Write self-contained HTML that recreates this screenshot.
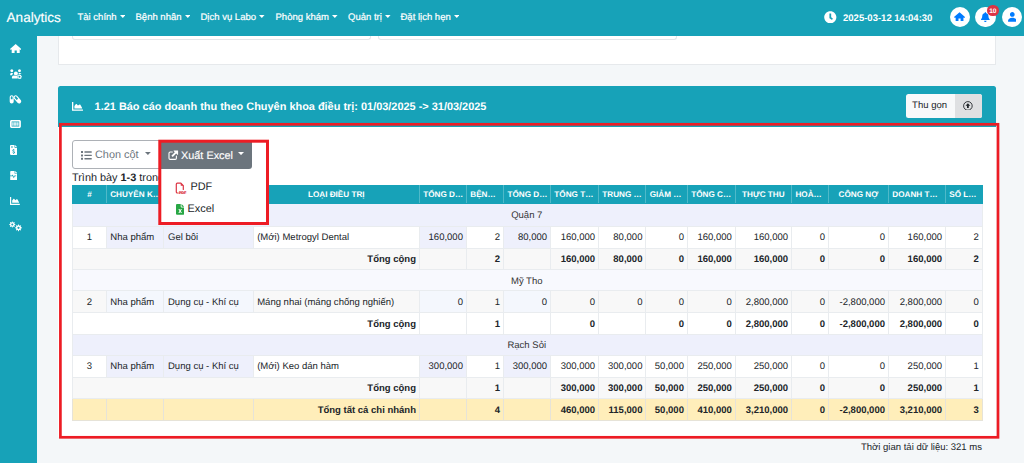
<!DOCTYPE html>
<html lang="vi">
<head>
<meta charset="utf-8">
<title>Analytics</title>
<style>
*{box-sizing:border-box;margin:0;padding:0}
html,body{width:1024px;height:463px;overflow:hidden}
body{text-rendering:geometricPrecision;background:#f4f7f9;font-family:"Liberation Sans",Arial,sans-serif;color:#212529;position:relative;font-size:9.53px}
.abs{position:absolute}
#nav{left:0;top:0;width:1024px;height:35.8px;background:#17a2b8}
#side{left:0;top:35px;width:37px;height:428px;background:#17a2b8}
#brand{-webkit-text-stroke:0.15px #fff;left:6.5px;top:8.6px;font-size:13.6px;color:#fff;line-height:18px;white-space:nowrap}
.nl{-webkit-text-stroke:0.2px #fff;top:12.4px;font-size:9.53px;color:#fff;line-height:12px;white-space:nowrap}
.nl svg{margin-left:3.1px;vertical-align:2.8px}
#time{left:843px;top:13.2px;font-size:9.53px;font-weight:bold;color:#fff;line-height:12px;white-space:nowrap}
.circ{width:20.6px;height:20.6px;border-radius:50%;background:#fff;top:6.7px}
#badge{left:986.8px;top:5.3px;padding-top:0.7px;width:12.1px;height:11.1px;border-radius:5.5px;background:#dc3545;color:#fff;font-size:6.6px;font-weight:bold;text-align:center;line-height:11.1px}
#card0{left:58px;top:35.8px;width:938px;height:29px;background:#fff;border:1px solid #e6e9ec;border-top:none}
.inp{top:35.8px;height:4.4px;border:1px solid #e3e6ea;border-top:none;border-radius:0 0 3px 3px;background:#fff}
#chead{left:58px;top:85.5px;width:938px;height:41.5px;background:#17a2b8;border-radius:2.5px 2.5px 0 0}
#cbody{left:58px;top:127px;width:938px;height:310px;background:#fff}
#ctitle{left:94.6px;top:99.8px;font-size:10.93px;font-weight:bold;color:#fff;line-height:14px;white-space:nowrap}
#redbig{left:59px;top:123px;width:940.4px;height:315.5px;border:2.8px solid #ed1c24}
#btnT{left:906px;top:94.2px;width:76.2px;height:23.7px;border-radius:2.5px;background:#f8f9fa;overflow:hidden}
#btnT span{position:absolute;left:6.1px;top:5.5px;font-size:9.53px;color:#212529;line-height:12px}
#btnT b{position:absolute;left:48.5px;top:0;width:28px;height:24px;background:#dfe0e2}
#bcol{left:72px;top:140.4px;width:92px;height:28.6px;border:1px solid #adb1b6;border-radius:3px;background:#fff}
#bcolt{left:95px;top:148px;font-size:10.89px;color:#6c757d;line-height:14px;white-space:nowrap}
#info{left:72px;top:170.5px;font-size:10.89px;line-height:14px;white-space:nowrap;color:#212529}
#ddmenu{left:160px;top:168px;width:108px;height:56px;background:#fff}
#bx{left:160px;top:141px;width:91.7px;height:28px;background:#6c757d;border-radius:0 0 3px 0}
#bxt{-webkit-text-stroke:0.15px #fff;left:181px;top:148.5px;font-size:10.89px;color:#fff;line-height:14px;white-space:nowrap}
#redsm{left:158.3px;top:139.7px;width:110.7px;height:85.7px;border:3.1px solid #ed1c24}
.ddi{font-size:10.89px;line-height:14px;color:#212529;white-space:nowrap}
#foot{right:42px;top:441.5px;font-size:9.53px;line-height:12px;color:#212529;white-space:nowrap}
table{position:absolute;left:72px;top:185.2px;width:909.8px;border-collapse:collapse;table-layout:fixed;font-size:9.53px}
td,th{height:21.77px;padding:1.5px 2.9px 0 3.5px;border:1px solid #e9ecef;overflow:hidden;white-space:nowrap;vertical-align:middle}
th{height:18.7px;background:#17a2b8;color:#fff;font-size:8.17px;font-weight:bold;text-align:center;border:1px solid #4fb9c9;border-top:none;border-bottom:1px solid #17a2b8;padding:1.3px 3.4px 0}
th.l{text-align:left}
th:first-child{border-left:1px solid #17a2b8}th:last-child{border-right:1px solid #17a2b8}
td.r{text-align:right}td.c{text-align:center;padding-left:3.2px;padding-right:3.2px}
tr.g td,tr.g2 td{padding-left:2.6px;padding-right:3.8px}
tr.g td,tr.g2 td{height:20.97px}
tr.g0 td{height:22.37px}
tr.g td{background:#eef0fc;text-align:center;color:#333}
tr.g2 td{background:#f8f9fe;text-align:center;color:#333}
tr.t td{font-weight:bold;text-align:right}
tr.s td{background:#f8f8f8}
td.h{background:#eef0fc}
tr.s td.h2{background:#f4f7fd}
tr.y td{background:#ffeeba;font-weight:bold;text-align:right;border-color:#e6e3d8}
</style>
</head>
<body>
<div id="side" class="abs"></div>
<div id="card0" class="abs"></div>
<div class="abs inp" style="left:72px;width:298.5px"></div>
<div class="abs inp" style="left:378px;width:298.5px"></div>
<div id="nav" class="abs"></div>
<div id="brand" class="abs">Analytics</div>
<div class="abs nl" style="left:77.5px">Tài chính<svg width="5.6" height="2.9" viewBox="0 0 56 29"><path fill="#fff" d="M0 0h56L28 29z"/></svg></div>
<div class="abs nl" style="left:135.5px">Bệnh nhân<svg width="5.6" height="2.9" viewBox="0 0 56 29"><path fill="#fff" d="M0 0h56L28 29z"/></svg></div>
<div class="abs nl" style="left:200.5px">Dịch vụ Labo<svg width="5.6" height="2.9" viewBox="0 0 56 29"><path fill="#fff" d="M0 0h56L28 29z"/></svg></div>
<div class="abs nl" style="left:275.5px">Phòng khám<svg width="5.6" height="2.9" viewBox="0 0 56 29"><path fill="#fff" d="M0 0h56L28 29z"/></svg></div>
<div class="abs nl" style="left:348px">Quản trị<svg width="5.6" height="2.9" viewBox="0 0 56 29"><path fill="#fff" d="M0 0h56L28 29z"/></svg></div>
<div class="abs nl" style="left:400.5px">Đặt lịch hẹn<svg width="5.6" height="2.9" viewBox="0 0 56 29"><path fill="#fff" d="M0 0h56L28 29z"/></svg></div>
<svg class="abs" style="left:824px;top:10.8px" width="12.6" height="12.6" viewBox="0 0 512 512" ><path fill="#fff" d="M256 8C119 8 8 119 8 256s111 248 248 248 248-111 248-248S393 8 256 8zm57.100 350.100L224.900 294c-3.100-2.300-4.900-5.900-4.900-9.700V116c0-6.600 5.400-12 12-12h48c6.600 0 12 5.400 12 12v137.700l63.500 46.200c5.400 3.900 6.500 11.400 2.600 16.800l-28.200 38.800c-3.900 5.300-11.400 6.500-16.800 2.600z"/></svg>
<div id="time" class="abs">2025-03-12 14:04:30</div>
<div class="abs circ" style="left:949.5px"></div>
<div class="abs circ" style="left:975.4px"></div>
<div class="abs circ" style="left:1001.6px"></div>
<svg class="abs" style="left:953.9px;top:12px" width="11.1" height="9.4" viewBox="0 0 114 92" ><path fill="#007bff" d="M57 0L114 50L105 60L97 53V92H68V64H46V92H17V53L9 60L0 50Z"/></svg>
<svg class="abs" style="left:981.3px;top:11.9px" width="8.7" height="9.95" viewBox="0 0 448 512" ><path fill="#007bff" d="M224 512c35.320 0 63.970-28.650 63.970-64H160.030c0 35.350 28.650 64 63.970 64zm215.390-149.710c-19.320-20.760-55.470-51.990-55.470-154.290 0-77.700-54.480-139.900-127.940-155.160V32c0-17.670-14.320-32-31.980-32s-31.980 14.330-31.980 32v20.840C118.560 68.100 64.080 130.300 64.080 208c0 102.300-36.150 133.530-55.470 154.290-6 6.450-8.660 14.160-8.610 21.710.11 16.400 12.980 32 32.100 32h383.800c19.120 0 32-15.600 32.100-32 .05-7.550-2.610-15.270-8.610-21.710z"/></svg>
<svg class="abs" style="left:1007.5px;top:12px" width="8.6" height="9.8" viewBox="0 0 448 512" ><path fill="#007bff" d="M224 250c68 0 124-56 124-124S292 2 224 2 100 58 100 126s56 124 124 124zM0 470c0-110 90-176 224-176s224 66 224 176v10c0 18-14 32-32 32H32c-18 0-32-14-32-32z"/></svg>
<div id="badge" class="abs">10</div>
<svg class="abs" style="left:9.7px;top:43.8px" width="11.4" height="9.2" viewBox="0 0 114 92" ><path fill="#fff" d="M57 0L114 50L105 60L97 53V92H68V64H46V92H17V53L9 60L0 50Z"/></svg>
<svg class="abs" style="left:9px;top:68px" width="13" height="11.4" viewBox="0 0 130 114" ><g fill="#fff">
<circle cx="28" cy="28" r="15"/><circle cx="105" cy="28" r="15"/>
<path d="M12 72v-10c0-8 6-13 13-13h8c3 0 6 1 8 3-5 5-8 11-8 20z"/>
<path d="M93 49h18c7 0 12 4 13 10-8-3-18-1-24 6 0-6-3-12-7-16z"/>
<circle cx="69" cy="56" r="20"/>
<path d="M36 106c-4 0-7-3-7-7v-3c0-12 9-20 20-20h4c5 3 10 4 16 4s11-1 16-4h3c-6 8-6 20 0 30z"/>
</g><path fill="#fff" fill-rule="evenodd" d="M129.8 85.2 L129.8 90.8 L122.9 94.3 L121.1 98.1 L122.7 105.7 L118.3 109.2 L111.3 105.9 L107.1 106.9 L102.2 112.8 L96.7 111.6 L94.9 104.1 L91.6 101.4 L83.8 101.3 L81.4 96.3 L86.1 90.1 L86.1 85.9 L81.4 79.7 L83.8 74.7 L91.6 74.6 L94.9 71.9 L96.7 64.4 L102.2 63.2 L107.1 69.1 L111.3 70.1 L118.3 66.8 L122.7 70.3 L121.1 77.9 L122.9 81.7zM115 88a10 10 0 1 0 -20 0a10 10 0 1 0 20 0z"/></svg>
<svg class="abs" style="left:9px;top:94px" width="13" height="11" viewBox="0 0 130 110" ><g fill="#fff"><path fill-rule="evenodd" d="M27 12c-11 0-20 9-20 20v42c0 11 9 20 20 20s20-9 20-20V32c0-11-9-20-20-20zm-9 41V32c0-5 4-9 9-9s9 4 9 9v21z"/>
<g transform="rotate(-40 84 54)"><path fill-rule="evenodd" d="M84 6c-12 0-21 9-21 21v54c0 12 9 21 21 21s21-9 21-21V27c0-12-9-21-21-21zm-10 48V27c0-6 4-10 10-10s10 4 10 10v27z"/></g></g></svg>
<svg class="abs" style="left:9.7px;top:120.4px" width="10.9" height="8.1" viewBox="0 0 109 81" ><path fill="#fff" fill-rule="evenodd" d="M15 0h79c8 0 15 7 15 15v51c0 8-7 15-15 15H15C7 81 0 74 0 66V15C0 7 7 0 15 0zm2 16v49h75V16z"/><path fill="#fff" d="M23 23h10v35H23zm14 0h11v35H37zm15 0h11v35H52zm15 0h11v35H67zm15 0h5v35h-5z"/></svg>
<svg class="abs" style="left:9.8px;top:144.6px" width="7.4" height="10" viewBox="0 0 72 96" ><path fill="#fff" fill-rule="evenodd" d="M8 0h36v22c0 3 3 6 6 6h22v60c0 4-4 8-8 8H8c-4 0-8-4-8-8V8c0-4 4-8 8-8zm42 0l22 22H52c-1 0-2-1-2-2zM10 12v5h18v-5zm0 10v5h18v-5zM33 38v5c-6 1-10 5-10 11 0 6 4 9 11 11 5 2 6 3 6 5s-2 4-5 4c-3 0-6-1-8-3l-4 5c3 3 6 4 10 5v5h6v-5c6-1 10-5 10-11 0-6-4-9-11-11-5-2-6-3-6-5s2-3 4-3c3 0 5 1 7 2l4-5c-3-2-5-3-8-4v-6z"/></svg>
<svg class="abs" style="left:9.8px;top:170.8px" width="7.6" height="9.6" viewBox="0 0 72 96" ><path fill="#fff" fill-rule="evenodd" d="M8 0h36v22c0 3 3 6 6 6h22v60c0 4-4 8-8 8H8c-4 0-8-4-8-8V8c0-4 4-8 8-8zm42 0l22 22H52c-1 0-2-1-2-2zM0 46h18l6-12 12 24 6-12h18v7H46l-10 20-12-24-2 4H0z"/></svg>
<svg class="abs" style="left:9.7px;top:196.7px" width="9.9" height="7.9" viewBox="0 0 100 80" ><path fill="#fff" d="M0 3c0-2 1-3 3-3h6c2 0 3 1 3 3v65h85c2 0 3 1 3 3v6c0 2-1 3-3 3H3c-2 0-3-1-3-3zM22 58V38c0-3 2-5 4-7l8-10c3-3 7-3 10 0l10 11 12-8c4-2 8-1 10 2l14 24c2 3 2 5 2 8z"/></svg>
<svg class="abs" style="left:9px;top:220.5px" width="14" height="11" viewBox="0 0 140 110" ><path fill="#fff" fill-rule="evenodd" d="M63.9 32.0 L63.9 38.0 L54.1 41.4 L52.4 45.4 L57.0 54.7 L52.7 59.0 L43.4 54.4 L39.4 56.1 L36.0 65.9 L30.0 65.9 L26.6 56.1 L22.6 54.4 L13.3 59.0 L9.0 54.7 L13.6 45.4 L11.9 41.4 L2.1 38.0 L2.1 32.0 L11.9 28.6 L13.6 24.6 L9.0 15.3 L13.3 11.0 L22.6 15.6 L26.6 13.9 L30.0 4.1 L36.0 4.1 L39.4 13.9 L43.4 15.6 L52.7 11.0 L57.0 15.3 L52.4 24.6 L54.1 28.6zM43 35a10 10 0 1 0 -20 0a10 10 0 1 0 20 0zM128.8 64.7 L128.8 71.3 L118.0 75.0 L116.2 79.3 L121.3 89.6 L116.6 94.3 L106.3 89.2 L102.0 91.0 L98.3 101.8 L91.7 101.8 L88.0 91.0 L83.7 89.2 L73.4 94.3 L68.7 89.6 L73.8 79.3 L72.0 75.0 L61.2 71.3 L61.2 64.7 L72.0 61.0 L73.8 56.7 L68.7 46.4 L73.4 41.7 L83.7 46.8 L88.0 45.0 L91.7 34.2 L98.3 34.2 L102.0 45.0 L106.3 46.8 L116.6 41.7 L121.3 46.4 L116.2 56.7 L118.0 61.0zM106 68a11 11 0 1 0 -22 0a11 11 0 1 0 22 0z"/></svg>
<div id="chead" class="abs"></div>
<div id="cbody" class="abs"></div>
<div id="ctitle" class="abs">1.21 Báo cáo doanh thu theo Chuyên khoa điều trị: 01/03/2025 -&gt; 31/03/2025</div>
<svg class="abs" style="left:72.2px;top:101.8px" width="11" height="8.8" viewBox="0 0 100 80" ><path fill="#fff" d="M0 3c0-2 1-3 3-3h6c2 0 3 1 3 3v65h85c2 0 3 1 3 3v6c0 2-1 3-3 3H3c-2 0-3-1-3-3zM22 58V38c0-3 2-5 4-7l8-10c3-3 7-3 10 0l10 11 12-8c4-2 8-1 10 2l14 24c2 3 2 5 2 8z"/></svg>
<div id="btnT" class="abs"><span>Thu gọn</span><b></b></div>
<svg class="abs" style="left:963px;top:100.7px" width="9.8" height="9.8" viewBox="0 0 98 98" ><circle cx="49" cy="49" r="43" fill="none" stroke="#212529" stroke-width="9"/><path fill="#212529" d="M49 22l24 25H58v24H40V47H25z"/></svg>
<div id="bcol" class="abs"></div>
<svg class="abs" style="left:81.2px;top:149.9px" width="10.8" height="10.8" viewBox="0 0 512 512" ><path fill="#6c757d" d="M80 368H16a16 16 0 0 0-16 16v64a16 16 0 0 0 16 16h64a16 16 0 0 0 16-16v-64a16 16 0 0 0-16-16zm0-320H16A16 16 0 0 0 0 64v64a16 16 0 0 0 16 16h64a16 16 0 0 0 16-16V64a16 16 0 0 0-16-16zm0 160H16a16 16 0 0 0-16 16v64a16 16 0 0 0 16 16h64a16 16 0 0 0 16-16v-64a16 16 0 0 0-16-16zm416 176H176a16 16 0 0 0-16 16v32a16 16 0 0 0 16 16h320a16 16 0 0 0 16-16v-32a16 16 0 0 0-16-16zm0-320H176a16 16 0 0 0-16 16v32a16 16 0 0 0 16 16h320a16 16 0 0 0 16-16V80a16 16 0 0 0-16-16zm0 160H176a16 16 0 0 0-16 16v32a16 16 0 0 0 16 16h320a16 16 0 0 0 16-16v-32a16 16 0 0 0-16-16z"/></svg>
<div id="bcolt" class="abs">Chọn cột</div>
<svg class="abs" style="left:145.3px;top:152.3px" width="5.8" height="3" viewBox="0 0 58 30" ><path fill="#6c757d" d="M0 0h58L29 30z"/></svg>
<div id="info" class="abs">Trình bày <b>1-3</b> trong <b>3</b> dòng</div>
<table>
<colgroup><col style="width:33.8px"><col style="width:57.7px"><col style="width:89.2px"><col style="width:166.2px"><col style="width:47.0px"><col style="width:37.2px"><col style="width:46.9px"><col style="width:48.0px"><col style="width:47.4px"><col style="width:41.5px"><col style="width:47.9px"><col style="width:56.3px"><col style="width:36.8px"><col style="width:60.1px"><col style="width:57.0px"><col style="width:36.8px"></colgroup>
<tr><th>#</th><th class="l">CHUYÊN K…</th><th>NHÓM</th><th>LOẠI ĐIỀU TRỊ</th><th class="l">TỔNG D…</th><th class="l">BỆN…</th><th class="l">TỔNG D…</th><th class="l">TỔNG T…</th><th class="l">TRUNG …</th><th class="l">GIẢM …</th><th class="l">TỔNG C…</th><th>THỰC THU</th><th class="l">HOÀ…</th><th>CÔNG NỢ</th><th class="l">DOANH T…</th><th class="l">SỐ L…</th></tr>
<tr class="g g0"><td colspan="16">Quận 7</td></tr>
<tr><td class="c">1</td><td class="h">Nha phẩm</td><td class="h">Gel bôi</td><td>(Mới) Metrogyl Dental</td><td class="r h">160,000</td><td class="r">2</td><td class="r h">80,000</td><td class="r">160,000</td><td class="r">80,000</td><td class="r">0</td><td class="r">160,000</td><td class="r">160,000</td><td class="r">0</td><td class="r">0</td><td class="r">160,000</td><td class="r">2</td></tr>
<tr class="t s"><td colspan="4">Tổng cộng</td><td></td><td>2</td><td></td><td>160,000</td><td>80,000</td><td>0</td><td>160,000</td><td>160,000</td><td>0</td><td>0</td><td>160,000</td><td>2</td></tr>
<tr class="g2"><td colspan="16">Mỹ Tho</td></tr>
<tr class="s"><td class="c">2</td><td class="h2">Nha phẩm</td><td class="h2">Dụng cụ - Khí cụ</td><td>Máng nhai (máng chống nghiến)</td><td class="r h2">0</td><td class="r">1</td><td class="r h2">0</td><td class="r">0</td><td class="r">0</td><td class="r">0</td><td class="r">0</td><td class="r">2,800,000</td><td class="r">0</td><td class="r">-2,800,000</td><td class="r">2,800,000</td><td class="r">0</td></tr>
<tr class="t"><td colspan="4">Tổng cộng</td><td></td><td>1</td><td></td><td>0</td><td></td><td>0</td><td>0</td><td>2,800,000</td><td>0</td><td>-2,800,000</td><td>2,800,000</td><td>0</td></tr>
<tr class="g"><td colspan="16">Rạch Sỏi</td></tr>
<tr><td class="c">3</td><td class="h">Nha phẩm</td><td class="h">Dụng cụ - Khí cụ</td><td>(Mới) Keo dán hàm</td><td class="r h">300,000</td><td class="r">1</td><td class="r h">300,000</td><td class="r">300,000</td><td class="r">300,000</td><td class="r">50,000</td><td class="r">250,000</td><td class="r">250,000</td><td class="r">0</td><td class="r">0</td><td class="r">250,000</td><td class="r">1</td></tr>
<tr class="t s"><td colspan="4">Tổng cộng</td><td></td><td>1</td><td></td><td>300,000</td><td>300,000</td><td>50,000</td><td>250,000</td><td>250,000</td><td>0</td><td>0</td><td>250,000</td><td>1</td></tr>
<tr class="y"><td></td><td></td><td></td><td>Tổng tất cả chi nhánh</td><td></td><td>4</td><td></td><td>460,000</td><td>115,000</td><td>50,000</td><td>410,000</td><td>3,210,000</td><td>0</td><td>-2,800,000</td><td>3,210,000</td><td>3</td></tr>
</table>
<div id="ddmenu" class="abs"></div>
<div id="bx" class="abs"></div>
<div id="bxt" class="abs">Xuất Excel</div>
<svg class="abs" style="left:168.2px;top:150.2px" width="10.4" height="10.4" viewBox="0 0 104 104" ><path fill="none" stroke="#fff" stroke-width="11" stroke-linejoin="round" stroke-linecap="round" d="M44 20H22c-7 0-12 5-12 12v50c0 7 5 12 12 12h50c7 0 12-5 12-12V60"/><path fill="#fff" d="M60 4h38c2 0 3 1 3 3v38c0 4-4 5-7 3L82 36 50 68c-2 2-4 2-6 0l-8-8c-2-2-2-4 0-6l32-32-12-12c-2-3-1-6 4-6z"/></svg>
<svg class="abs" style="left:237.7px;top:151.9px" width="6.1" height="3.1" viewBox="0 0 61 31" ><path fill="#fff" d="M0 0h61L30.500 31z"/></svg>
<svg class="abs" style="left:175.4px;top:181.6px" width="12" height="12" viewBox="0 0 120 120" ><path fill="none" stroke="#dc3545" stroke-width="12" stroke-linejoin="round" stroke-linecap="round" d="M31 110h-8c-6 0-10-4-10-10V22c0-6 4-10 10-10h36l24 24v38"/><path fill="#dc3545" d="M57 10l28 28H63c-3 0-6-3-6-6z"/><text x="39" y="116" font-family="Liberation Sans, sans-serif" font-weight="bold" font-size="36" fill="#dc3545" stroke="#dc3545" stroke-width="2.5" textLength="74" lengthAdjust="spacingAndGlyphs">PDF</text></svg>
<div class="abs ddi" style="left:190.5px;top:179.5px">PDF</div>
<svg class="abs" style="left:175.9px;top:204.3px" width="8.1" height="10.8" viewBox="0 0 82 108" ><path fill="#28a745" fill-rule="evenodd" d="M10 0h38v26c0 4 4 8 8 8h26v64c0 6-4 10-10 10H10c-6 0-10-4-10-10V10C0 4 4 0 10 0zm46 0l26 26H60c-2 0-4-2-4-4zM24 50l12 20-12 20h11l7-13 7 13h11L48 70l12-20H49l-7 13-7-13z"/></svg>
<div class="abs ddi" style="left:187.5px;top:202.1px">Excel</div>
<svg class="abs" style="left:0;top:0" width="1024" height="463" viewBox="0 0 1024 463"><rect x="159.8" y="141.2" width="107.7" height="82.3" fill="none" stroke="#ed1c24" stroke-width="3"/><rect x="60.4" y="124.3" width="937.6" height="313" fill="none" stroke="#ed1c24" stroke-width="2.7"/></svg>
<div id="foot" class="abs">Thời gian tải dữ liệu: 321 ms</div>
</body>
</html>
